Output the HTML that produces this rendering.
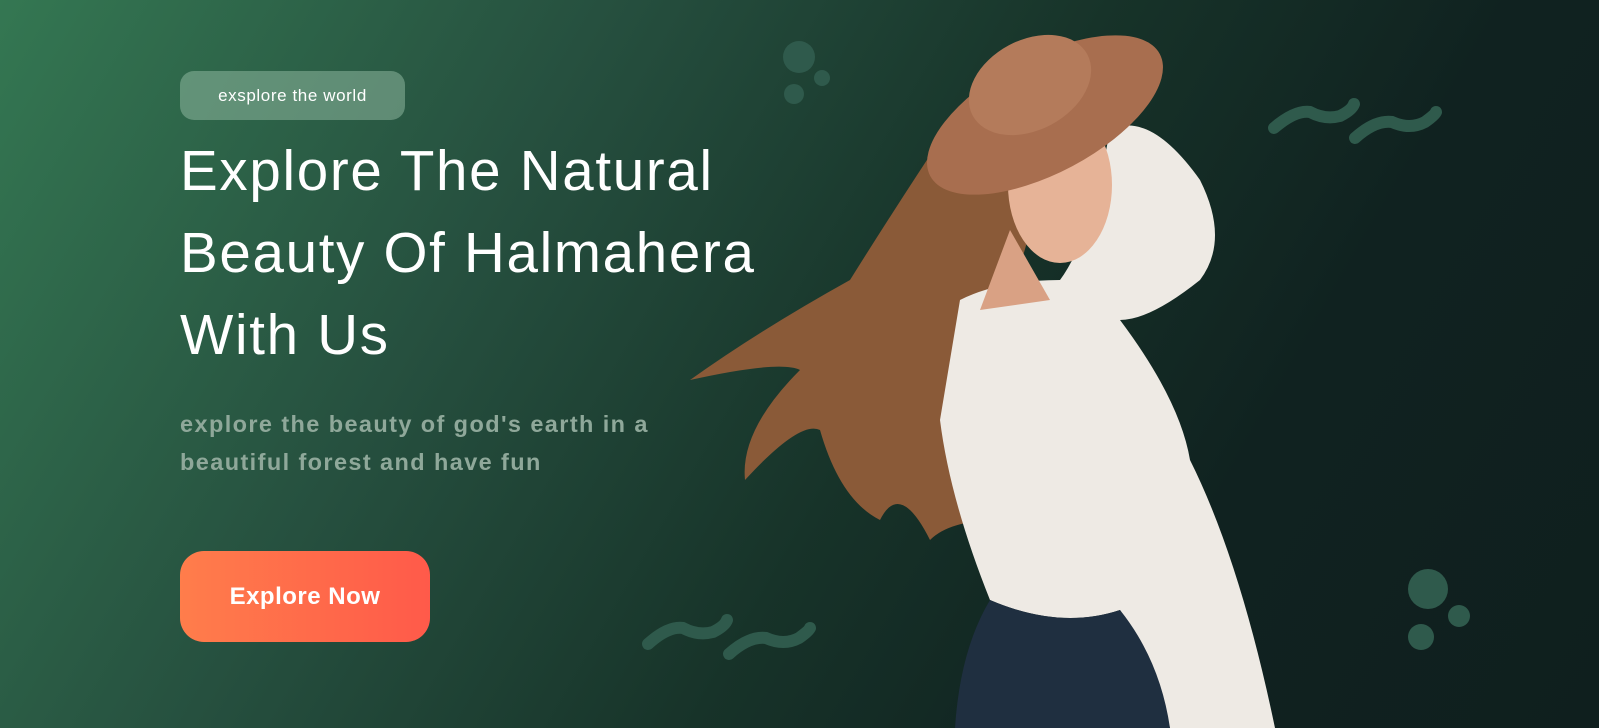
<!DOCTYPE html>
<html><head><style>
*{margin:0;padding:0;box-sizing:border-box}
body{width:1599px;height:728px;overflow:hidden;background:linear-gradient(120deg,#347752 0%,#26503f 30%,#173329 55%,#102220 75%,#0f1f1e 100%);font-family:"Liberation Sans",sans-serif;position:relative}
.badge{position:absolute;left:180px;top:71px;width:225px;height:49px;border-radius:14px;background:rgba(150,190,165,.5);color:#fff;font-size:17px;letter-spacing:.6px;display:flex;align-items:center;justify-content:center}
h1{position:absolute;left:180px;top:130px;color:#fff;font-weight:normal;font-size:56.5px;line-height:82px;letter-spacing:1.7px;white-space:nowrap}
.sub{position:absolute;left:180px;top:405px;color:#8fa89a;font-weight:bold;font-size:23.5px;line-height:38px;letter-spacing:1.4px;white-space:nowrap}
.btn{position:absolute;left:180px;top:551px;width:250px;height:91px;border-radius:24px;background:linear-gradient(90deg,#ff7d4b,#ff5a4a);color:#fff;font-weight:bold;font-size:24px;letter-spacing:.5px;display:flex;align-items:center;justify-content:center}
svg{position:absolute;left:0;top:0}
</style></head><body>
<svg width="1599" height="728">
<g fill="#2f5a4c">
<circle cx="799" cy="57" r="16"/><circle cx="822" cy="78" r="8"/><circle cx="794" cy="94" r="10"/>
<circle cx="1428" cy="589" r="20"/><circle cx="1459" cy="616" r="11"/><circle cx="1421" cy="637" r="13"/>
</g>
<g fill="none" stroke="#2f5a4c" stroke-width="12" stroke-linecap="round">
<path d="M1274 128 Q1295 110 1310 112 Q1325 120 1340 116 Q1352 110 1354 104"/>
<path d="M1355 138 Q1375 120 1392 122 Q1410 130 1425 122 Q1435 115 1436 112"/>
<path d="M648 644 Q668 626 683 628 Q698 636 713 632 Q725 626 727 620"/>
<path d="M729 654 Q749 636 766 638 Q784 646 799 638 Q809 631 810 628"/>
</g>
<path d="M960 110 Q900 200 850 280 Q760 330 690 380 Q780 360 800 370 Q740 430 745 480 Q800 420 820 430 Q840 500 880 520 Q900 480 930 540 Q950 520 1000 520 L1010 300 Q1040 200 1060 120 Z" fill="#8a5a38"/>
<path d="M960 300 Q1000 280 1060 280 Q1090 240 1110 130 Q1150 110 1200 180 Q1230 240 1200 280 Q1150 320 1120 320 Q1180 400 1190 460 Q1240 560 1275 728 L1170 728 Q1150 660 1120 610 Q1060 630 990 600 Q950 500 940 420 Z" fill="#eeeae4"/>
<path d="M990 600 Q1060 630 1120 610 Q1160 660 1170 728 L955 728 Q960 650 990 600 Z" fill="#1f2f40"/>
<ellipse cx="1060" cy="185" rx="52" ry="78" fill="#e6b397"/>
<path d="M1010 230 L1050 300 L980 310 Z" fill="#d9a184"/>
<ellipse cx="1045" cy="115" rx="130" ry="58" transform="rotate(-28 1045 115)" fill="#a86e4f"/>
<ellipse cx="1030" cy="85" rx="65" ry="45" transform="rotate(-28 1030 85)" fill="#b47b5b"/>
</svg>
<div class="badge">exsplore the world</div>
<h1>Explore The Natural<br>Beauty Of Halmahera<br>With Us</h1>
<div class="sub">explore the beauty of god's earth in a<br>beautiful forest and have fun</div>
<div class="btn">Explore Now</div>
</body></html>
